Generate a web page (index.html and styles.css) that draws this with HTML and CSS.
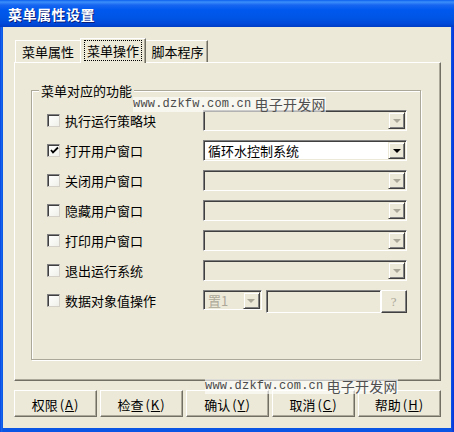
FILE: index.html
```html
<!DOCTYPE html>
<html lang="zh-CN">

<head>
	<meta charset="UTF-8">
	<title>菜单属性设置</title>
	<link rel="stylesheet" href="styles.css">
</head>

<body>
	<div class="window">
		<!-- Title bar -->
		<div class="titlebar">
			<span class="title">菜单属性设置</span>
		</div>

		<div class="client">
			<!-- Tabs -->
			<div class="tabs">
				<div class="tab first">菜单属性</div>
				<div class="tab active"><span class="focus">菜单操作</span></div>
				<div class="tab last">脚本程序</div>
			</div>

			<div class="panel">
				<div class="group">
					<span class="group-title">菜单对应的功能</span>

					<div class="row">
						<span class="check"></span>
						<span class="label">执行运行策略块</span>
						<div class="combo disabled"><span class="value"></span><span class="drop"><i class="arrow"></i></span></div>
					</div>

					<div class="row">
						<span class="check checked">
							<svg width="9" height="9" viewBox="0 0 9 9"><path d="M1 4 L3 6.5 L8 1.5" fill="none" stroke="#000" stroke-width="1.8"/></svg>
						</span>
						<span class="label">打开用户窗口</span>
						<div class="combo"><span class="value">循环水控制系统</span><span class="drop"><i class="arrow"></i></span></div>
					</div>

					<div class="row">
						<span class="check"></span>
						<span class="label">关闭用户窗口</span>
						<div class="combo disabled"><span class="value"></span><span class="drop"><i class="arrow"></i></span></div>
					</div>

					<div class="row">
						<span class="check"></span>
						<span class="label">隐藏用户窗口</span>
						<div class="combo disabled"><span class="value"></span><span class="drop"><i class="arrow"></i></span></div>
					</div>

					<div class="row">
						<span class="check"></span>
						<span class="label">打印用户窗口</span>
						<div class="combo disabled"><span class="value"></span><span class="drop"><i class="arrow"></i></span></div>
					</div>

					<div class="row">
						<span class="check"></span>
						<span class="label">退出运行系统</span>
						<div class="combo disabled"><span class="value"></span><span class="drop"><i class="arrow"></i></span></div>
					</div>

					<div class="row">
						<span class="check"></span>
						<span class="label">数据对象值操作</span>
						<div class="data-ops">
							<div class="combo small disabled"><span class="value">置1</span><span class="drop"><i class="arrow"></i></span></div>
							<div class="field"></div>
							<div class="qbtn">?</div>
						</div>
					</div>
				</div>
			</div>

			<!-- Buttons -->
			<div class="buttons">
				<div class="btn">权限<span class="key">(<u>A</u>)</span></div>
				<div class="btn">检查<span class="key">(<u>K</u>)</span></div>
				<div class="btn">确认<span class="key">(<u>Y</u>)</span></div>
				<div class="btn">取消<span class="key">(<u>C</u>)</span></div>
				<div class="btn">帮助<span class="key">(<u>H</u>)</span></div>
			</div>
		</div>

		<!-- watermark stamped over the screenshot -->
		<div class="watermark wm-top"><span class="wm-url">www.dzkfw.com.cn</span><span class="wm-name">电子开发网</span></div>
		<div class="watermark wm-bottom"><span class="wm-url">www.dzkfw.com.cn</span><span class="wm-name">电子开发网</span></div>
	</div>
</body>

</html>
```

FILE: styles.css
```css
body {
	margin: 0;
	padding: 0;
	font-family: "Noto Sans CJK SC", "Liberation Sans", sans-serif;
	font-size: 13px;
	color: #000;
	background: #fff;
}

.window {
	position: relative;
	width: 454px;
	height: 432px;
	box-sizing: border-box;
	padding: 0 3px 4px 3px;
	background: linear-gradient(to right, #0831D9, #166AEE 1px, #0B55E4 3px, #0B55E4 451px, #0831D9);
	overflow: hidden;
	display: flex;
	flex-direction: column;
}

/* Title bar */
.titlebar {
	height: 27px;
	margin: 0 -3px;
	padding-left: 8px;
	display: flex;
	align-items: center;
	background: linear-gradient(to bottom, #0A5FEE 0, #3D8FFA 2px, #1766F0 5px, #0058EE 10px, #0055E5 18px, #0048D8 24px, #003CC4 27px);
}

.title {
	color: #fff;
	font-size: 14px;
	font-weight: bold;
	text-shadow: 1px 1px 0 #0A1E7A;
	letter-spacing: 0.5px;
	margin-top: 1px;
}

.client {
	flex: 1;
	background-color: #ECE9D8;
	display: flex;
	flex-direction: column;
	padding-left: 11px;
}

/* Tabs */
.tabs {
	display: flex;
	align-items: flex-end;
	height: 24px;
	margin-top: 11px;
	padding-left: 1px;
	position: relative;
	z-index: 1;
}

.tab {
	height: 22px;
	box-sizing: border-box;
	border-top: 1px solid #fff;
	border-left: 1px solid #fff;
	border-right: 1px solid #716F64;
	box-shadow: inset -1px 0 0 #ACA899;
	display: flex;
	align-items: center;
	justify-content: center;
	background: #ECE9D8;
}

.tab.first {
	width: 65px;
	border-right: none;
	box-shadow: none;
}

.tab.last {
	width: 62px;
	border-left: none;
	padding-left: 2px;
}

.tab.active {
	width: 66px;
	height: 25px;
	margin-bottom: -1px;
	padding-bottom: 1px;
}

.focus {
	outline: 1px dotted #000;
	outline-offset: 0;
	padding: 1px 2px;
	line-height: 17px;
}

.panel {
	width: 427px;
	height: 319px;
	box-sizing: border-box;
	border-top: 1px solid #fff;
	border-left: 1px solid #fff;
	border-right: 1px solid #716F64;
	border-bottom: 1px solid #716F64;
	box-shadow: inset -1px -1px 0 #ACA899;
	padding: 27px 0 0 16px;
}

/* Group box */
.group {
	position: relative;
	width: 390px;
	height: 270px;
	box-sizing: border-box;
	border: 1px solid #ACA899;
	box-shadow: inset 1px 1px 0 #fff, 1px 1px 0 #fff;
	padding: 14px 0 0 15px;
}

.group-title {
	position: absolute;
	top: -9px;
	left: 7px;
	padding: 0 2px;
	background: #ECE9D8;
	line-height: 17px;
}

.row {
	height: 30px;
	display: grid;
	grid-template-columns: 13px 133px 204px;
	column-gap: 5px;
	align-items: center;
}

.check {
	width: 13px;
	height: 13px;
	box-sizing: border-box;
	border-top: 1px solid #808080;
	border-left: 1px solid #808080;
	border-right: 1px solid #D4D0C8;
	border-bottom: 1px solid #D4D0C8;
	box-shadow: inset 1px 1px 0 #404040;
	background: linear-gradient(135deg, #fff, #F0F0EA);
	display: flex;
	align-items: center;
	justify-content: center;
}

.check svg {
	display: block;
	margin: 1px 0 0 1px;
}

.label {
	line-height: 17px;
	margin-top: 1px;
}

/* Combo boxes */
.combo {
	height: 21px;
	box-sizing: border-box;
	border-top: 1px solid #808080;
	border-left: 1px solid #808080;
	border-right: 1px solid #fff;
	border-bottom: 1px solid #fff;
	box-shadow: inset 1px 1px 0 #404040, inset -1px -1px 0 #ECE9D8;
	padding: 1px;
	background: #fff;
	display: flex;
	align-items: center;
}

.combo.disabled {
	background: #ECE9D8;
}

.value {
	flex: 1;
	padding-left: 3px;
	line-height: 17px;
	white-space: nowrap;
	overflow: hidden;
}

.disabled .value {
	color: #ACA899;
}

.drop {
	width: 17px;
	height: 17px;
	box-sizing: border-box;
	background: #ECE9D8;
	border-top: 1px solid #ECE9D8;
	border-left: 1px solid #ECE9D8;
	border-right: 1px solid #404040;
	border-bottom: 1px solid #404040;
	box-shadow: inset 1px 1px 0 #fff, inset -1px -1px 0 #808080;
	display: flex;
	align-items: center;
	justify-content: center;
}

.arrow {
	width: 0;
	height: 0;
	border-left: 4px solid transparent;
	border-right: 4px solid transparent;
	border-top: 4px solid #000;
	margin-top: 1px;
}

.disabled .arrow {
	border-top-color: #ACA899;
}

.data-ops {
	display: flex;
	align-items: flex-start;
	height: 23px;
	margin-top: 3px;
}

.combo.small {
	width: 60px;
	height: 20px;
}

.combo.small .value {
	color: #ACA899;
	font-family: "Noto Sans CJK SC", "Liberation Serif", serif;
}

.field {
	width: 117px;
	height: 23px;
	margin-left: 4px;
	box-sizing: border-box;
	border-top: 1px solid #808080;
	border-left: 1px solid #808080;
	border-right: 1px solid #fff;
	border-bottom: 1px solid #fff;
	box-shadow: inset 1px 1px 0 #404040;
	background: #ECE9D8;
}

.qbtn {
	width: 27px;
	height: 23px;
	box-sizing: border-box;
	border-top: 1px solid #fff;
	border-left: 1px solid #fff;
	border-right: 1px solid #404040;
	border-bottom: 1px solid #404040;
	box-shadow: inset -1px -1px 0 #808080;
	color: #ACA899;
	font-family: "Liberation Serif", serif;
	font-size: 13px;
	display: flex;
	align-items: center;
	justify-content: center;
}

/* Bottom buttons */
.buttons {
	display: flex;
	gap: 3px;
	margin-top: 9px;
}

.btn {
	width: 83px;
	height: 27px;
	box-sizing: border-box;
	border-top: 1px solid #fff;
	border-left: 1px solid #fff;
	border-right: 1px solid #716F64;
	border-bottom: 1px solid #716F64;
	box-shadow: inset -1px -1px 0 #ACA899;
	display: flex;
	align-items: center;
	justify-content: center;
	line-height: 14px;
	padding-top: 3px;
}

.key {
	margin-left: 2px;
	letter-spacing: 1px;
}

.btn u {
	text-underline-offset: 1px;
}

/* Watermark */
.watermark {
	position: absolute;
	display: flex;
	align-items: center;
	height: 15px;
	line-height: 13px;
	background: rgba(255, 255, 255, 0.6);
	color: #4A4A4A;
}

.wm-url {
	font-family: "Liberation Mono", monospace;
	font-size: 12px;
	letter-spacing: 0.2px;
}

.wm-name {
	font-family: "Noto Sans CJK SC", sans-serif;
	font-size: 14px;
	margin-left: 3px;
	color: #505050;
	letter-spacing: 0.3px;
}

.wm-top {
	left: 133px;
	top: 97px;
}

.wm-bottom {
	left: 205px;
	top: 379px;
}
```
